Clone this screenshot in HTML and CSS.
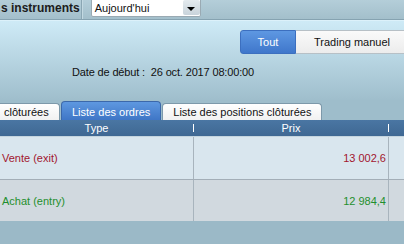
FILE: index.html
```html
<!DOCTYPE html>
<html lang="fr">
<head>
<meta charset="utf-8">
<link rel="stylesheet" href="styles.css">
</head>
<body>
<div class="topbar">
  <div class="label">s instruments</div>
  <div class="divider"></div>
  <div class="combo">
    <span class="combo-text">Aujourd'hui</span>
    <span class="combo-btn"><span class="tri"></span></span>
  </div>
</div>
<div class="panel">
  <div class="seg-row">
    <div class="seg seg-on">Tout</div>
    <div class="seg seg-off">Trading manuel</div>
  </div>
  <div class="date">Date de début :&nbsp; 26 oct. 2017 08:00:00</div>
</div>
<div class="tabbar">
  <div class="tab tab-first">clôturées</div>
  <div class="tab tab-on">Liste des ordres</div>
  <div class="tab">Liste des positions clôturées</div>
</div>
<div class="grid">
  <div class="head">
    <div class="hcell c1">Type</div>
    <div class="hsep"></div>
    <div class="hcell c2">Prix</div>
    <div class="hsep"></div>
    <div class="hcell c3"></div>
  </div>
  <div class="row row-a">
    <div class="cell c1 red">Vente (exit)</div>
    <div class="vsep"></div>
    <div class="cell c2 num red">13 002,6</div>
    <div class="vsep"></div>
    <div class="cell c3"></div>
  </div>
  <div class="row row-b">
    <div class="cell c1 green">Achat (entry)</div>
    <div class="vsep"></div>
    <div class="cell c2 num green">12 984,4</div>
    <div class="vsep"></div>
    <div class="cell c3"></div>
  </div>
</div>
</body>
</html>
```

FILE: styles.css
```css
html, body {
  margin: 0;
  padding: 0;
}
body {
  width: 404px;
  height: 244px;
  overflow: hidden;
  background: #9bb9c7;
  font-family: "Liberation Sans", Arial, sans-serif;
  font-size: 11px;
  color: #111;
}
.topbar {
  height: 19px;
  border-bottom: 1px solid #86a3b1;
  background: linear-gradient(#b4ced9, #a3bfcb);
  display: flex;
  align-items: flex-start;
  overflow: hidden;
}
.label {
  font-weight: bold;
  font-size: 12px;
  line-height: 17px;
  padding-left: 1px;
  color: #1c1c1c;
}
.divider {
  width: 1px;
  height: 19px;
  margin-left: 1px;
  background: #8aa6b3;
  box-shadow: 1px 0 0 #c3d9e2;
}
.combo {
  margin-left: 9px;
  margin-top: -3px;
  width: 108px;
  height: 18px;
  background: #fff;
  border: 1px solid #9aaab3;
  border-radius: 2px;
  display: flex;
  align-items: stretch;
}
.combo-text {
  flex: 1;
  padding-left: 3px;
  padding-top: 4px;
  font-size: 11px;
  line-height: 13px;
}
.combo-btn {
  width: 17px;
  margin: 2px 0 1px 0;
  border-radius: 2px;
  background: linear-gradient(#e4eaee, #c9d4db);
  display: flex;
  align-items: center;
  justify-content: center;
  padding-top: 2px;
}
.tri {
  width: 0;
  height: 0;
  border-left: 4px solid transparent;
  border-right: 4px solid transparent;
  border-top: 4px solid #000;
}
.panel {
  height: 80px;
  background: linear-gradient(#cfebf7, #9fbecc);
  box-shadow: inset 0 1px 0 #dcf1fa;
}
.seg-row {
  display: flex;
  padding-top: 10px;
  padding-left: 240px;
}
.seg {
  height: 22px;
  line-height: 22px;
  text-align: center;
  font-size: 11px;
  white-space: nowrap;
  flex-shrink: 0;
}
.seg-on {
  width: 54px;
  border: 1px solid #3c6fbf;
  border-radius: 3px 0 0 3px;
  background: linear-gradient(#5e98e2, #3f77cb);
  color: #fff;
}
.seg-off {
  width: 112px;
  border: 1px solid #b7c0c6;
  border-left: none;
  background: linear-gradient(#fafafa, #ececec);
  color: #111;
}
.date {
  margin-top: 12px;
  padding-left: 72px;
  line-height: 12px;
  font-size: 11px;
  letter-spacing: -0.15px;
  color: #111;
}
.tabbar {
  height: 20px;
  background: #9ebdcb;
  display: flex;
  align-items: flex-end;
  gap: 1px;
}
.tab {
  height: 16px;
  line-height: 16px;
  padding: 0 10px;
  border: 1px solid #7d99aa;
  border-bottom: none;
  border-radius: 4px 4px 0 0;
  background: linear-gradient(#ffffff, #f1f1f1);
  white-space: nowrap;
  flex-shrink: 0;
  color: #111;
}
.tab-first {
  width: 45px;
  padding-left: 4px;
  border-left: none;
  border-top-left-radius: 0;
}
.tab-on {
  height: 18px;
  line-height: 20px;
  background: linear-gradient(#5e98e0, #3f76c6);
  border-color: #3b68aa;
  color: #fff;
}
.grid {
  display: flex;
  flex-direction: column;
}
.head {
  height: 16px;
  display: flex;
  align-items: center;
  background: linear-gradient(#4a76a3, #3f6893);
  border-bottom: 1px solid #c4d4de;
  color: #fff;
}
.hcell {
  text-align: center;
  line-height: 16px;
}
.hsep {
  width: 1px;
  height: 8px;
  background: #fff;
}
.c1 { width: 193px; }
.c2 { width: 194px; }
.c3 { flex: 1; }
.row {
  display: flex;
  align-items: stretch;
}
.row-a {
  height: 42px;
  background: #d9e6ee;
  border-bottom: 1px solid #a3aeb7;
}
.row-b {
  height: 41px;
  background: #d1d9df;
}
.cell {
  display: flex;
  align-items: center;
  padding-left: 2px;
  box-sizing: border-box;
}
.num {
  justify-content: flex-end;
  padding-left: 0;
  padding-right: 2px;
}
.vsep {
  width: 1px;
  background: #a8b4bd;
}
.red { color: #a2162e; }
.green { color: #1f8f2d; }
```
